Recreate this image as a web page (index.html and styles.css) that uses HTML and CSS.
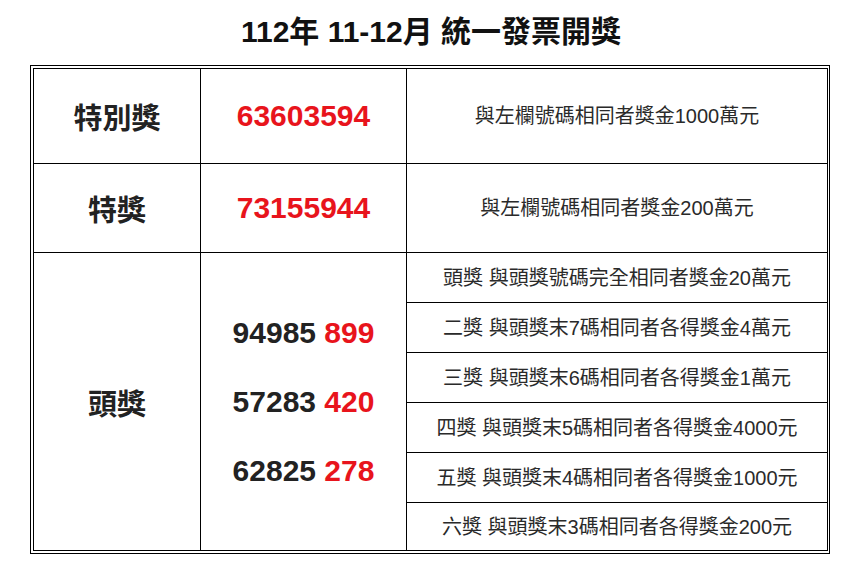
FILE: index.html
```html
<!DOCTYPE html>
<html lang="zh-Hant">
<head>
<meta charset="utf-8">
<title>112年 11-12月 統一發票開獎</title>
<link rel="stylesheet" href="styles.css">
</head>
<body>
<h1 class="title">112年 11-12月 統一發票開獎</h1>
<div class="frame">
  <table class="prize">
    <colgroup>
      <col class="c1"><col class="c2"><col class="c3">
    </colgroup>
    <tr class="r-special">
      <td class="name">特別獎</td>
      <td class="num red">63603594</td>
      <td class="desc">與左欄號碼相同者獎金1000萬元</td>
    </tr>
    <tr class="r-grand">
      <td class="name">特獎</td>
      <td class="num red">73155944</td>
      <td class="desc">與左欄號碼相同者獎金200萬元</td>
    </tr>
    <tr class="r-sub">
      <td class="name" rowspan="6">頭獎</td>
      <td class="num" rowspan="6">
        <div class="nums">
          <div>94985 <span class="red">899</span></div>
          <div>57283 <span class="red">420</span></div>
          <div>62825 <span class="red">278</span></div>
        </div>
      </td>
      <td class="desc">頭獎 與頭獎號碼完全相同者獎金20萬元</td>
    </tr>
    <tr class="r-sub"><td class="desc">二獎 與頭獎末7碼相同者各得獎金4萬元</td></tr>
    <tr class="r-sub"><td class="desc">三獎 與頭獎末6碼相同者各得獎金1萬元</td></tr>
    <tr class="r-sub"><td class="desc">四獎 與頭獎末5碼相同者各得獎金4000元</td></tr>
    <tr class="r-sub"><td class="desc">五獎 與頭獎末4碼相同者各得獎金1000元</td></tr>
    <tr class="r-sub last"><td class="desc">六獎 與頭獎末3碼相同者各得獎金200元</td></tr>
  </table>
</div>
</body>
</html>
```
FILE: styles.css
```css
html, body {
  margin: 0;
  padding: 0;
  background: #fff;
}
body {
  font-family: "Liberation Sans", "Noto Sans CJK TC", sans-serif;
  color: #222;
}
.title {
  margin: 0;
  height: 65px;
  line-height: 64px;
  font-size: 30px;
  font-weight: bold;
  text-align: center;
  color: #111;
  padding-left: 4px;
}
.frame {
  margin-left: 30px;
  width: 800px;
  box-sizing: border-box;
  border: 1px solid #000;
  padding: 2px;
}
.prize {
  width: 794px;
  border-collapse: collapse;
  table-layout: fixed;
}
.c1 { width: 167px; }
.c2 { width: 206px; }
.c3 { width: 421px; }
.prize td {
  border: 1px solid #000;
  padding: 0;
  text-align: center;
  vertical-align: middle;
}
.r-special td { height: 94px; }
.r-grand td { height: 88px; }
.r-sub .desc { height: 49px; }
.r-sub.last .desc { height: 47px; }
.name {
  font-size: 29px;
  font-weight: bold;
  color: #222;
}
.num {
  font-size: 30px;
  font-weight: bold;
  color: #222;
}
.red {
  color: #e8141c;
}
.nums {
  display: flex;
  flex-direction: column;
  align-items: center;
}
.nums div {
  line-height: 69px;
}
.desc {
  font-size: 20px;
  line-height: 24px;
  color: #2a2a2a;
}
```
